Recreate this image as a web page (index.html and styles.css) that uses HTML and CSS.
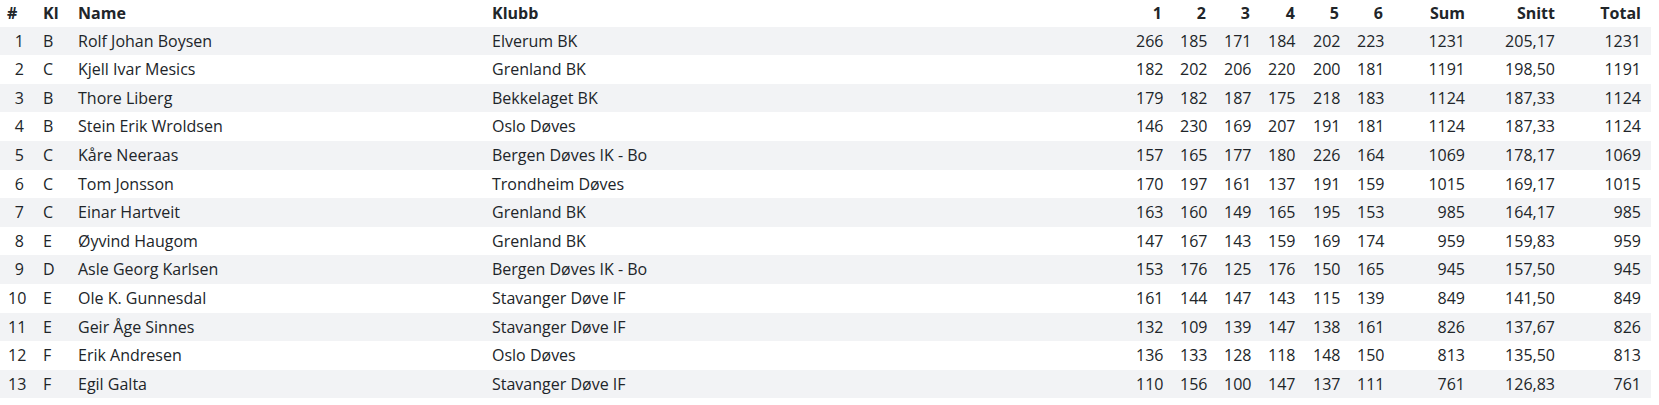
FILE: index.html
```html
<!DOCTYPE html>
<html lang="no">

<head>
    <meta charset="UTF-8">
    <meta name="viewport" content="width=device-width, initial-scale=1.0">
    <title>Resultater</title>
    <link rel="stylesheet" href="styles.css">
</head>

<body>

    <table class="results">
        <colgroup>
            <col class="c-pos">
            <col class="c-kl">
            <col class="c-name">
            <col class="c-klubb">
            <col class="c-s">
            <col class="c-s">
            <col class="c-s">
            <col class="c-s4">
            <col class="c-s">
            <col class="c-s">
            <col class="c-sum">
            <col class="c-snitt">
            <col class="c-total">
        </colgroup>
        <thead>
            <tr>
                <th class="pos-head">#</th>
                <th>Kl</th>
                <th>Name</th>
                <th>Klubb</th>
                <th class="num">1</th>
                <th class="num">2</th>
                <th class="num">3</th>
                <th class="num">4</th>
                <th class="num">5</th>
                <th class="num">6</th>
                <th class="num">Sum</th>
                <th class="num">Snitt</th>
                <th class="num">Total</th>
            </tr>
        </thead>
        <tbody>
            <tr><td class="num">1</td><td>B</td><td>Rolf Johan Boysen</td><td>Elverum BK</td><td class="num">266</td><td class="num">185</td><td class="num">171</td><td class="num">184</td><td class="num">202</td><td class="num">223</td><td class="num">1231</td><td class="num">205,17</td><td class="num">1231</td></tr>
            <tr><td class="num">2</td><td>C</td><td>Kjell Ivar Mesics</td><td>Grenland BK</td><td class="num">182</td><td class="num">202</td><td class="num">206</td><td class="num">220</td><td class="num">200</td><td class="num">181</td><td class="num">1191</td><td class="num">198,50</td><td class="num">1191</td></tr>
            <tr><td class="num">3</td><td>B</td><td>Thore Liberg</td><td>Bekkelaget BK</td><td class="num">179</td><td class="num">182</td><td class="num">187</td><td class="num">175</td><td class="num">218</td><td class="num">183</td><td class="num">1124</td><td class="num">187,33</td><td class="num">1124</td></tr>
            <tr><td class="num">4</td><td>B</td><td>Stein Erik Wroldsen</td><td>Oslo Døves</td><td class="num">146</td><td class="num">230</td><td class="num">169</td><td class="num">207</td><td class="num">191</td><td class="num">181</td><td class="num">1124</td><td class="num">187,33</td><td class="num">1124</td></tr>
            <tr><td class="num">5</td><td>C</td><td>Kåre Neeraas</td><td>Bergen Døves IK - Bo</td><td class="num">157</td><td class="num">165</td><td class="num">177</td><td class="num">180</td><td class="num">226</td><td class="num">164</td><td class="num">1069</td><td class="num">178,17</td><td class="num">1069</td></tr>
            <tr><td class="num">6</td><td>C</td><td>Tom Jonsson</td><td>Trondheim Døves</td><td class="num">170</td><td class="num">197</td><td class="num">161</td><td class="num">137</td><td class="num">191</td><td class="num">159</td><td class="num">1015</td><td class="num">169,17</td><td class="num">1015</td></tr>
            <tr><td class="num">7</td><td>C</td><td>Einar Hartveit</td><td>Grenland BK</td><td class="num">163</td><td class="num">160</td><td class="num">149</td><td class="num">165</td><td class="num">195</td><td class="num">153</td><td class="num">985</td><td class="num">164,17</td><td class="num">985</td></tr>
            <tr><td class="num">8</td><td>E</td><td>Øyvind Haugom</td><td>Grenland BK</td><td class="num">147</td><td class="num">167</td><td class="num">143</td><td class="num">159</td><td class="num">169</td><td class="num">174</td><td class="num">959</td><td class="num">159,83</td><td class="num">959</td></tr>
            <tr><td class="num">9</td><td>D</td><td>Asle Georg Karlsen</td><td>Bergen Døves IK - Bo</td><td class="num">153</td><td class="num">176</td><td class="num">125</td><td class="num">176</td><td class="num">150</td><td class="num">165</td><td class="num">945</td><td class="num">157,50</td><td class="num">945</td></tr>
            <tr><td class="num">10</td><td>E</td><td>Ole K. Gunnesdal</td><td>Stavanger Døve IF</td><td class="num">161</td><td class="num">144</td><td class="num">147</td><td class="num">143</td><td class="num">115</td><td class="num">139</td><td class="num">849</td><td class="num">141,50</td><td class="num">849</td></tr>
            <tr><td class="num">11</td><td>E</td><td>Geir Åge Sinnes</td><td>Stavanger Døve IF</td><td class="num">132</td><td class="num">109</td><td class="num">139</td><td class="num">147</td><td class="num">138</td><td class="num">161</td><td class="num">826</td><td class="num">137,67</td><td class="num">826</td></tr>
            <tr><td class="num">12</td><td>F</td><td>Erik Andresen</td><td>Oslo Døves</td><td class="num">136</td><td class="num">133</td><td class="num">128</td><td class="num">118</td><td class="num">148</td><td class="num">150</td><td class="num">813</td><td class="num">135,50</td><td class="num">813</td></tr>
            <tr><td class="num">13</td><td>F</td><td>Egil Galta</td><td>Stavanger Døve IF</td><td class="num">110</td><td class="num">156</td><td class="num">100</td><td class="num">147</td><td class="num">137</td><td class="num">111</td><td class="num">761</td><td class="num">126,83</td><td class="num">761</td></tr>
        </tbody>
    </table>

</body>

</html>
```

FILE: styles.css
```css
* {
    box-sizing: border-box;
    padding: 0;
    margin: 0;
}

body {
    font-family: 'Open Sans', 'Noto Sans', sans-serif;
    font-size: 16px;
    color: #212529;
    background-color: #fff;
}

.results {
    width: 1651px;
    table-layout: fixed;
    border-collapse: collapse;
}

.c-pos { width: 35px; }
.c-kl { width: 35px; }
.c-name { width: 414px; }
.c-klubb { width: 644px; }
.c-s { width: 44px; }
.c-s4 { width: 45px; }
.c-sum { width: 82px; }
.c-snitt { width: 90px; }
.c-total { width: 86px; }

.results th,
.results td {
    padding: 4px 8px;
    line-height: 20.6px;
    text-align: left;
    white-space: nowrap;
}

.results th {
    padding-top: 3px;
    padding-bottom: 3px;
    line-height: 20.7px;
    font-weight: 700;
}

.results .num {
    text-align: right;
    padding-right: 10px;
}

.results td:first-child {
    padding-right: 11px;
}

.results th.pos-head {
    padding-left: 7px;
}

.results tbody tr:nth-child(odd) {
    background-color: #f2f3f5;
}
```
